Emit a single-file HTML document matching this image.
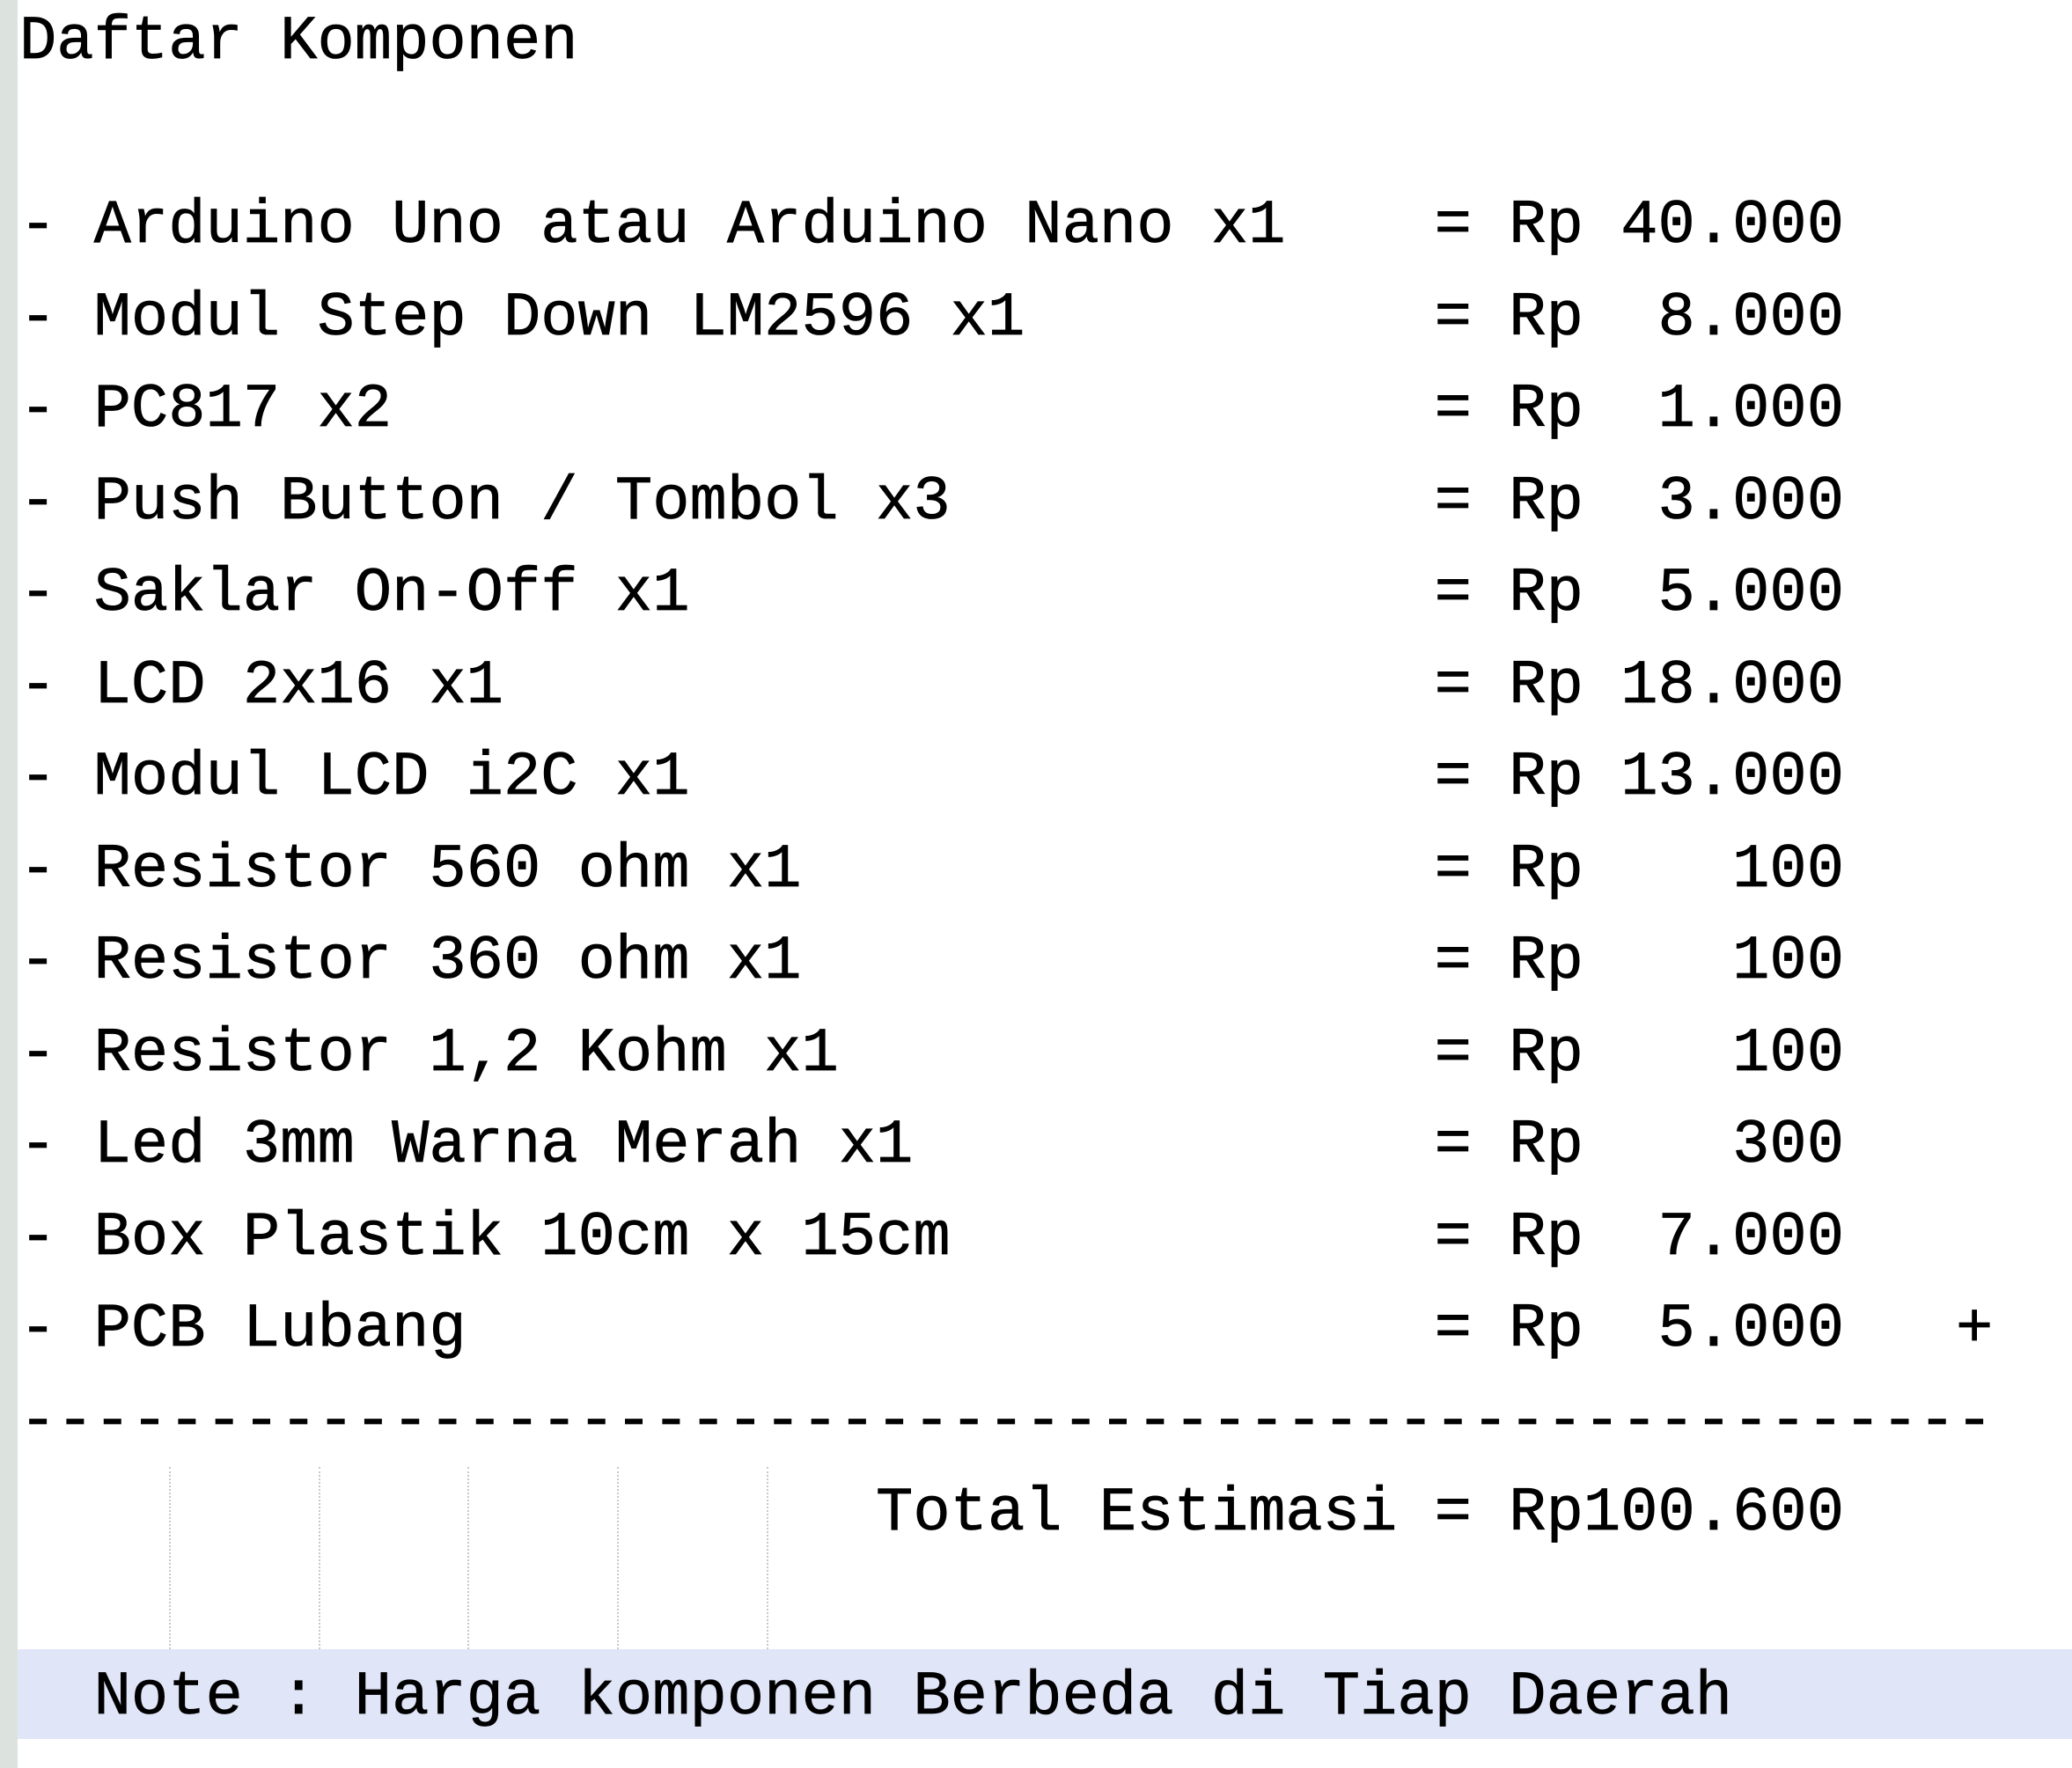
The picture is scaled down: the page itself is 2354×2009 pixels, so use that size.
<!DOCTYPE html>
<html><head><meta charset="utf-8"><style>
html,body{margin:0;padding:0;background:#fff;width:2354px;height:2009px;overflow:hidden;position:relative}
.bar{position:absolute;left:0;top:0;width:20px;height:2009px;background:#dce3df}
.note{position:absolute;left:20px;top:1874px;width:2334px;height:102px;background:#e0e5f8}
.v{position:absolute;top:1667px;height:207px;border-left:2px dotted #c8c8c8}
.t{position:absolute;left:22px;top:-4px;font-family:"Liberation Mono","Courier New",monospace;font-size:70.5px;line-height:104.5px;color:#000;white-space:pre;-webkit-text-stroke:0.7px #000}
.t div{height:104.5px}
</style></head><body>
<div class="bar"></div>
<div class="note"></div>
<div class="v" style="left:192px"></div>
<div class="v" style="left:362px"></div>
<div class="v" style="left:531px"></div>
<div class="v" style="left:701px"></div>
<div class="v" style="left:871px"></div>
<div class="t"><div>Daftar Komponen</div><div> </div><div>- Arduino Uno atau Arduino Nano x1    = Rp 40.000</div><div>- Modul Step Down LM2596 x1           = Rp  8.000</div><div>- PC817 x2                            = Rp  1.000</div><div>- Push Button / Tombol x3             = Rp  3.000</div><div>- Saklar On-Off x1                    = Rp  5.000</div><div>- LCD 2x16 x1                         = Rp 18.000</div><div>- Modul LCD i2C x1                    = Rp 13.000</div><div>- Resistor 560 ohm x1                 = Rp    100</div><div>- Resistor 360 ohm x1                 = Rp    100</div><div>- Resistor 1,2 Kohm x1                = Rp    100</div><div>- Led 3mm Warna Merah x1              = Rp    300</div><div>- Box Plastik 10cm x 15cm             = Rp  7.000</div><div>- PCB Lubang                          = Rp  5.000   +</div><div>-----------------------------------------------------</div><div>                       Total Estimasi = Rp100.600</div><div> </div><div>  Note : Harga komponen Berbeda di Tiap Daerah</div></div>
</body></html>
